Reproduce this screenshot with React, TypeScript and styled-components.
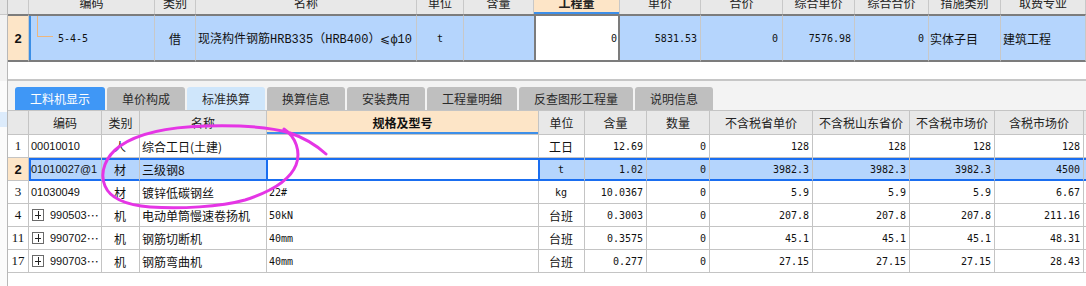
import React from 'react';
import styled, { createGlobalStyle, css } from 'styled-components';

const CJK = `"Noto Sans CJK SC", "Noto Sans", sans-serif`;
const MONO = `"DejaVu Sans Mono", "Liberation Mono", "Noto Sans CJK SC", monospace`;
const NAME_MONO = `"Liberation Mono", "DejaVu Sans Mono", "Noto Sans CJK SC", monospace`;
const SANS = `"Liberation Sans", "Noto Sans CJK SC", sans-serif`;
const SERIF = `"Liberation Serif", "Noto Sans CJK SC", serif`;

const BLUE = '#1a6ef0';
const SEL_BG = '#b5d5fd';
const PEACH = '#fde5c7';
const GRID = '#c4c4c4';

const GlobalStyle = createGlobalStyle`
  * { box-sizing: border-box; }
  html, body { margin: 0; padding: 0; background: #fff; }
  body {
    font-family: ${CJK};
    font-size: 12px;
    color: #111;
    overflow: hidden;
  }
`;

type Align = 'left' | 'center' | 'right';
type Face = 'cjk' | 'mono' | 'sans' | 'serif' | 'name';

const justify = (a?: Align) =>
  a === 'left' ? 'flex-start' : a === 'right' ? 'flex-end' : 'center';

const faceCss = (f?: Face) => {
  switch (f) {
    case 'mono':
      return css`font-family: ${MONO}; font-size: 10px;`;
    case 'sans':
      return css`font-family: ${SANS}; font-size: 11px;`;
    case 'serif':
      return css`font-family: ${SERIF}; font-size: 13px;`;
    case 'name':
      return css`font-family: ${NAME_MONO}; font-size: 12px;`;
    default:
      return css`font-family: ${CJK}; font-size: 12px;`;
  }
};

const Page = styled.div`
  position: relative;
  display: flex;
  width: 1086px;
  height: 286px;
  overflow: hidden;
  background: #fff;
`;

/* ---------- left strip ---------- */
const SideStrip = styled.div`
  width: 7px;
  flex: none;
  display: flex;
  flex-direction: column;
  background: #fbfbfb;
`;
const SideHead = styled.div`
  height: 15px;
  background: #e6e6e6;
  border-bottom: 1px solid #c8c8c8;
`;
const SideFill = styled.div`
  height: 66px;
  background: #f2f2f2;
`;
const SideGap = styled.div`
  height: 31px;
`;
const SideMark = styled.div`
  height: 15px;
  background: #dcebfb;
`;

/* ---------- main column ---------- */
const Main = styled.div`
  flex: 1;
  display: flex;
  flex-direction: column;
  border-left: 1px solid #b8b8b8;
  min-width: 0;
`;

/* ---------- top (quota) table ---------- */
const TopArea = styled.div`
  height: 81px;
  flex: none;
  border-bottom: 2px solid #c6c6c6;
  background: #fff;
`;

const TopGrid = styled.div`
  display: grid;
  grid-template-columns: 21px 126px 41px 221px 47px 70px 86px 81px 82px 72px 74px 72px 1fr;
  grid-template-rows: 14px 48px;
`;

const TopHead = styled.div<{ $hl?: boolean }>`
  height: 14px;
  background: #e8e8e8;
  border-right: 1px solid #c8c8c8;
  display: flex;
  align-items: flex-end;
  justify-content: center;
  padding-bottom: 5px;
  line-height: 12px;
  font-size: 12px;
  color: #222;
  overflow: hidden;
  white-space: nowrap;
  ${(p) =>
    p.$hl &&
    css`
      background: ${PEACH};
      font-weight: bold;
      box-shadow: inset 0 -2px 0 #3d8fe9;
    `}
`;

const TopCell = styled.div<{
  $align?: Align;
  $face?: Face;
  $work?: boolean;
  $noRight?: boolean;
  $num?: boolean;
  $mark?: boolean;
  $pr?: number;
  $pl?: number;
}>`
  height: 48px;
  background: ${SEL_BG};
  border-top: 2px solid #7c7c7c;
  border-bottom: 2px solid #7c7c7c;
  border-right: 1px solid #c8c8c8;
  display: flex;
  align-items: center;
  justify-content: ${(p) => justify(p.$align)};
  padding: 0 ${(p) => p.$pr ?? 3}px 0 ${(p) => p.$pl ?? 3}px;
  white-space: nowrap;
  overflow: hidden;
  color: #111;
  ${(p) => faceCss(p.$face)}
  ${(p) => p.$noRight && css`border-right: none;`}
  ${(p) =>
    p.$work &&
    css`
      background: #fff;
      border-left: 2px solid #7c7c7c;
      border-right: 2px solid #7c7c7c;
    `}
  ${(p) =>
    p.$num &&
    css`
      background: ${PEACH};
      font-family: ${SANS};
      font-weight: bold;
      font-size: 13px;
    `}
  ${(p) => p.$mark && css`box-shadow: inset 2px 0 0 #3a8ee6;`}
`;

const TreeLine = styled.span`
  display: block;
  align-self: flex-start;
  width: 16px;
  height: 21px;
  margin-left: 6px;
  margin-right: 5px;
  border-left: 1px solid #eeb67c;
  border-bottom: 1px solid #eeb67c;
  flex: none;
`;

/* ---------- tabs ---------- */
const TabBar = styled.div`
  height: 29px;
  flex: none;
  background: #f3f3f3;
  display: flex;
  align-items: flex-end;
  gap: 2px;
  padding-left: 7px;
`;

type TabKind = 'active' | 'plain' | 'soft';
const Tab = styled.div<{ $kind: TabKind }>`
  height: 23px;
  padding: 0 15px;
  display: flex;
  align-items: center;
  border-radius: 3px 3px 0 0;
  font-size: 12px;
  white-space: nowrap;
  color: ${(p) => (p.$kind === 'active' ? '#fff' : '#2a2a2a')};
  background: ${(p) =>
    p.$kind === 'active' ? '#3f97f6' : p.$kind === 'soft' ? '#cfe6fb' : '#bfbfbf'};
`;

/* ---------- bottom (resource) table ---------- */
const ResGrid = styled.div`
  display: grid;
  grid-template-columns: 21px 73px 38px 127px 272px 46px 62px 63px 103px 97px 85px 89px 1fr;
  border-top: 1px solid ${GRID};
`;

const HeadCell = styled.div<{ $hl?: boolean }>`
  height: 24px;
  background: #e8e8e8;
  border-right: 1px solid ${GRID};
  border-bottom: 1px solid ${GRID};
  display: flex;
  align-items: center;
  justify-content: center;
  font-size: 12px;
  color: #222;
  white-space: nowrap;
  overflow: hidden;
  ${(p) =>
    p.$hl &&
    css`
      background: ${PEACH};
      font-weight: bold;
      color: #111;
      box-shadow: inset 0 -2px 0 #3d8fe9;
    `}
`;

const BodyCell = styled.div<{
  $align?: Align;
  $face?: Face;
  $sel?: boolean;
  $fill?: boolean;
  $edgeL?: number;
  $edgeR?: boolean;
  $pl?: number;
  $pr?: number;
}>`
  height: 23px;
  background: ${(p) => (p.$fill ? SEL_BG : '#fff')};
  border-right: 1px solid ${(p) => (p.$edgeR ? BLUE : GRID)};
  border-bottom: 1px solid ${(p) => (p.$sel ? BLUE : GRID)};
  display: flex;
  align-items: center;
  justify-content: ${(p) => justify(p.$align)};
  padding: 0 ${(p) => p.$pr ?? 3}px 0 ${(p) => p.$pl ?? 2}px;
  white-space: nowrap;
  overflow: hidden;
  color: #111;
  ${(p) => faceCss(p.$face)}
  ${(p) =>
    p.$sel &&
    css`
      box-shadow: inset 0 2px 0 ${BLUE}, inset 0 -1px 0 ${BLUE}
        ${p.$edgeL ? `, inset ${p.$edgeL}px 0 0 ${BLUE}` : ''};
    `}
`;

const RowNum = styled.div<{ $sel?: boolean }>`
  height: 23px;
  border-right: 1px solid ${GRID};
  border-bottom: 1px solid ${GRID};
  display: flex;
  align-items: center;
  justify-content: center;
  font-family: ${SERIF};
  font-size: 13px;
  color: #111;
  background: #fff;
  ${(p) =>
    p.$sel &&
    css`
      background: ${PEACH};
      font-family: ${SANS};
      font-weight: bold;
      font-size: 13px;
    `}
`;

const ExpandBox = styled.span`
  position: relative;
  flex: none;
  width: 12px;
  height: 12px;
  margin: 0 6px 0 1px;
  border: 1px solid #6a6a6a;
  background: #fff;
  &::before,
  &::after {
    content: '';
    position: absolute;
    background: #222;
  }
  &::before {
    left: 2px;
    right: 2px;
    top: 4.5px;
    height: 1px;
  }
  &::after {
    top: 1px;
    bottom: 1px;
    left: 4.5px;
    width: 1px;
  }
`;

const Dots = styled.span`
  font-family: ${CJK};
  font-size: 12px;
  letter-spacing: 0;
`;

const Annotation = styled.svg`
  position: absolute;
  left: 0;
  top: 0;
  width: 1086px;
  height: 286px;
  pointer-events: none;
`;

/* ---------- data ---------- */
interface ResRow {
  n: string;
  code: string;
  expand?: boolean;
  kind: string;
  name: string;
  spec: string;
  unit: string;
  qty: string;
  amt: string;
  p: [string, string, string, string];
  sel?: boolean;
}

const rows: ResRow[] = [
  { n: '1', code: '00010010', kind: '人', name: '综合工日(土建)', spec: '', unit: '工日', qty: '12.69', amt: '0', p: ['128', '128', '128', '128'] },
  { n: '2', code: '01010027@1', kind: '材', name: '三级钢8', spec: '', unit: 't', qty: '1.02', amt: '0', p: ['3982.3', '3982.3', '3982.3', '4500'], sel: true },
  { n: '3', code: '01030049', kind: '材', name: '镀锌低碳钢丝', spec: '22#', unit: 'kg', qty: '10.0367', amt: '0', p: ['5.9', '5.9', '5.9', '6.67'] },
  { n: '4', code: '990503', expand: true, kind: '机', name: '电动单筒慢速卷扬机', spec: '50kN', unit: '台班', qty: '0.3003', amt: '0', p: ['207.8', '207.8', '207.8', '211.16'] },
  { n: '11', code: '990702', expand: true, kind: '机', name: '钢筋切断机', spec: '40mm', unit: '台班', qty: '0.3575', amt: '0', p: ['45.1', '45.1', '45.1', '48.31'] },
  { n: '17', code: '990703', expand: true, kind: '机', name: '钢筋弯曲机', spec: '40mm', unit: '台班', qty: '0.277', amt: '0', p: ['27.15', '27.15', '27.15', '28.43'] },
];

const topHeads = ['', '编码', '类别', '名称', '单位', '含量', '工程量', '单价', '合价', '综合单价', '综合合价', '措施类别', '取费专业'];
const resHeads = ['', '编码', '类别', '名称', '规格及型号', '单位', '含量', '数量', '不含税省单价', '不含税山东省价', '不含税市场价', '含税市场价', '含税'];
const tabs: { label: string; kind: TabKind }[] = [
  { label: '工料机显示', kind: 'active' },
  { label: '单价构成', kind: 'plain' },
  { label: '标准换算', kind: 'soft' },
  { label: '换算信息', kind: 'plain' },
  { label: '安装费用', kind: 'plain' },
  { label: '工程量明细', kind: 'plain' },
  { label: '反查图形工程量', kind: 'plain' },
  { label: '说明信息', kind: 'plain' },
];

const isLatin = (s: string) => /^[A-Za-z]+$/.test(s);

export default function App() {
  return (
    <>
      <GlobalStyle />
      <Page>
        <SideStrip>
          <SideHead />
          <SideFill />
          <SideGap />
          <SideMark />
        </SideStrip>
        <Main>
          <TopArea>
            <TopGrid>
              {topHeads.map((h, i) => (
                <TopHead key={i} $hl={h === '工程量'}>
                  {h}
                </TopHead>
              ))}
              <TopCell $num>2</TopCell>
              <TopCell $align="left" $face="mono" $mark $pl={2}>
                <TreeLine />
                5-4-5
              </TopCell>
              <TopCell>借</TopCell>
              <TopCell $align="left" $face="name" $pl={2}>
                现浇构件钢筋HRB335（HRB400）⩽ф10
              </TopCell>
              <TopCell $face="mono">t</TopCell>
              <TopCell $noRight />
              <TopCell $work $align="right" $face="mono" $pr={1}>
                0
              </TopCell>
              <TopCell $align="right" $face="mono">
                5831.53
              </TopCell>
              <TopCell $align="right" $face="mono" $pr={4}>
                0
              </TopCell>
              <TopCell $align="right" $face="mono">
                7576.98
              </TopCell>
              <TopCell $align="right" $face="mono" $pr={4}>
                0
              </TopCell>
              <TopCell $align="left" $pl={1}>
                实体子目
              </TopCell>
              <TopCell $align="left" $pl={2}>
                建筑工程
              </TopCell>
            </TopGrid>
          </TopArea>

          <TabBar>
            {tabs.map((t) => (
              <Tab key={t.label} $kind={t.kind}>
                {t.label}
              </Tab>
            ))}
          </TabBar>

          <ResGrid>
            {resHeads.map((h, i) => (
              <HeadCell key={i} $hl={h === '规格及型号'}>
                {i === resHeads.length - 1 ? '' : h}
              </HeadCell>
            ))}
            {rows.map((r) => (
              <React.Fragment key={r.n}>
                <RowNum $sel={r.sel}>{r.n}</RowNum>
                <BodyCell $align="left" $face="sans" $sel={r.sel} $fill={r.sel} $edgeL={r.sel ? 2 : 0}>
                  {r.expand && <ExpandBox />}
                  {r.code}
                  {r.expand && <Dots>…</Dots>}
                </BodyCell>
                <BodyCell $sel={r.sel} $fill={r.sel}>
                  {r.kind}
                </BodyCell>
                <BodyCell $align="left" $sel={r.sel} $fill={r.sel} $edgeR={r.sel}>
                  {r.name}
                </BodyCell>
                <BodyCell $align="left" $face="mono" $sel={r.sel} $edgeL={r.sel ? 1 : 0} $edgeR={r.sel}>
                  {r.spec}
                </BodyCell>
                <BodyCell $face={isLatin(r.unit) ? 'mono' : 'cjk'} $sel={r.sel} $fill={r.sel} $edgeL={r.sel ? 1 : 0}>
                  {r.unit}
                </BodyCell>
                <BodyCell $align="right" $face="mono" $sel={r.sel} $fill={r.sel}>
                  {r.qty}
                </BodyCell>
                <BodyCell $align="right" $face="mono" $sel={r.sel} $fill={r.sel}>
                  {r.amt}
                </BodyCell>
                {r.p.map((v, i) => (
                  <BodyCell key={i} $align="right" $face="mono" $sel={r.sel} $fill={r.sel}>
                    {v}
                  </BodyCell>
                ))}
                <BodyCell $sel={r.sel} $fill={r.sel} />
              </React.Fragment>
            ))}
          </ResGrid>
        </Main>

        <Annotation viewBox="0 0 1086 286">
          <path
            d="M 284 129 C 296 137, 301 152, 296 165 C 290 180, 270 192, 245 200 C 220 207, 180 209, 150 207 C 125 205, 110 198, 105 186 C 99 172, 106 156, 120 146 C 140 132, 170 127, 205 126 C 240 125, 270 127, 290 133 C 305 138, 316 145, 326 154"
            fill="none"
            stroke="#e535e5"
            strokeWidth={3}
            strokeLinecap="round"
            strokeLinejoin="round"
          />
        </Annotation>
      </Page>
    </>
  );
}
